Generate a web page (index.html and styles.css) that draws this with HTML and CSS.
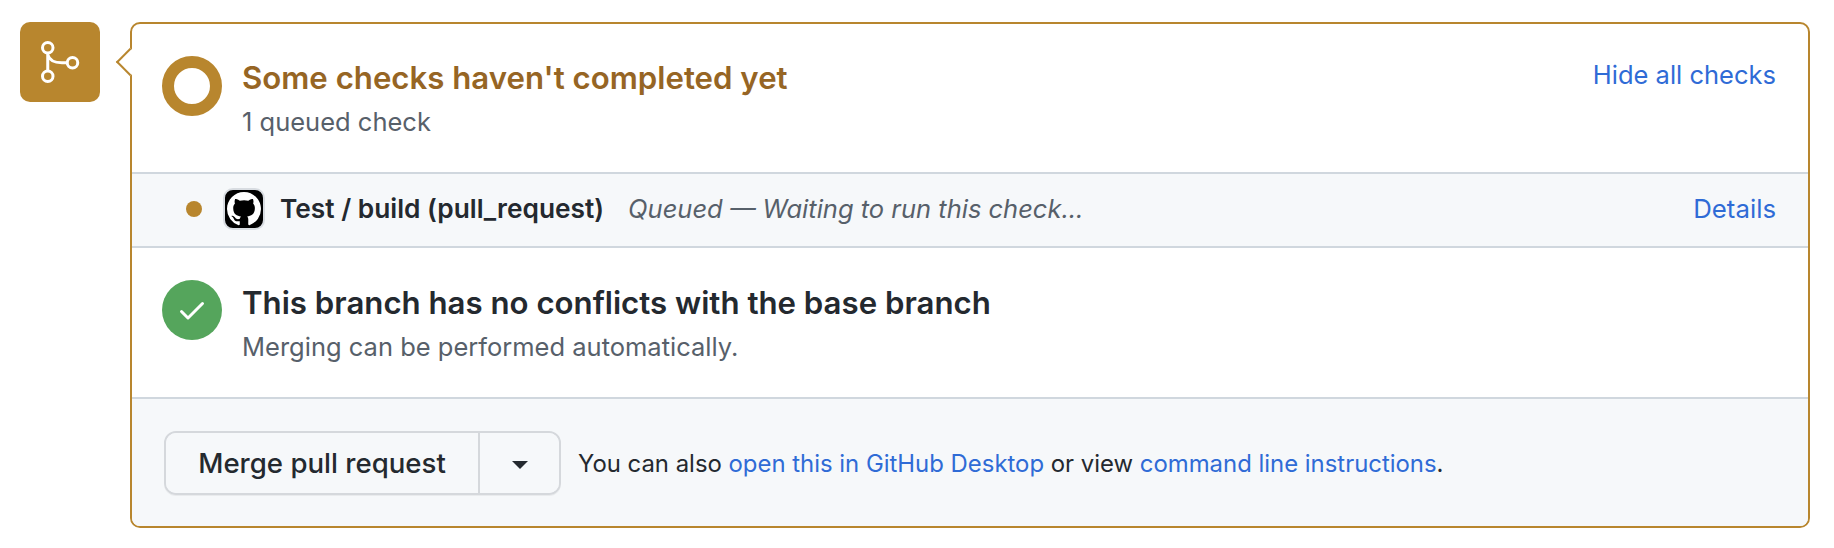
FILE: index.html
```html
<!DOCTYPE html>
<html lang="en">
<head>
    <meta charset="UTF-8">
    <title>Merge status</title>
    <link rel="stylesheet" href="styles.css">
</head>
<body>
    <div class="merge-area">
        <div class="merge-badge">
            <svg class="merge-icon" viewBox="0 0 16 16" width="48" height="48">
                <circle cx="4.25" cy="3.25" r="1.75"></circle>
                <circle cx="4.25" cy="12.75" r="1.75"></circle>
                <circle cx="12.5" cy="8.25" r="1.75"></circle>
                <path d="M4.25 5v6M4.25 5.5C4.7 7.3 6.6 8.25 9 8.25h1.75"></path>
            </svg>
        </div>
        <div class="merge-box">
            <div class="box-caret"></div>

            <div class="section section-checks">
                <div class="status-ring"></div>
                <div class="section-text">
                    <h3 class="section-title title-pending">Some checks haven't completed yet</h3>
                    <div class="section-sub">1 queued check</div>
                </div>
                <a class="link toggle-link" href="#">Hide all checks</a>
            </div>

            <div class="check-row">
                <span class="check-dot"></span>
                <span class="check-avatar">
                    <svg viewBox="0 0 16 16" width="34" height="34">
                        <path d="M8 0c4.42 0 8 3.58 8 8a8.013 8.013 0 0 1-5.45 7.59c-.4.08-.55-.17-.55-.38 0-.27.01-1.13.01-2.2 0-.75-.25-1.23-.54-1.48 1.78-.2 3.65-.88 3.65-3.95 0-.88-.31-1.59-.82-2.15.08-.2.36-1.02-.08-2.12 0 0-.67-.22-2.2.82-.64-.18-1.32-.27-2-.27-.68 0-1.36.09-2 .27-1.53-1.03-2.2-.82-2.2-.82-.44 1.1-.16 1.92-.08 2.12-.51.56-.82 1.28-.82 2.15 0 3.06 1.86 3.75 3.64 3.95-.23.2-.44.55-.51 1.07-.46.21-1.61.55-2.33-.66-.15-.24-.6-.83-1.23-.82-.67.01-.27.38.01.53.34.19.73.9.82 1.13.16.45.68 1.31 2.69.94 0 .67.01 1.3.01 1.49 0 .21-.15.45-.55.38A7.995 7.995 0 0 1 0 8c0-4.42 3.58-8 8-8Z"></path>
                    </svg>
                </span>
                <strong class="check-name">Test / build (pull_request)</strong>
                <em class="check-note">Queued — Waiting to run this check...</em>
                <a class="link details-link" href="#">Details</a>
            </div>

            <div class="section section-conflicts">
                <div class="status-ok">
                    <svg viewBox="0 0 16 16" width="32" height="32">
                        <path d="M13.78 4.22a.75.75 0 0 1 0 1.06l-7.25 7.25a.75.75 0 0 1-1.06 0L2.22 9.28a.751.751 0 0 1 .018-1.042.751.751 0 0 1 1.042-.018L6 10.94l6.72-6.72a.75.75 0 0 1 1.06 0Z"></path>
                    </svg>
                </div>
                <div class="section-text">
                    <h3 class="section-title">This branch has no conflicts with the base branch</h3>
                    <div class="section-sub">Merging can be performed automatically.</div>
                </div>
            </div>

            <div class="merge-footer">
                <div class="btn-group">
                    <button class="btn btn-merge">Merge pull request</button>
                    <button class="btn btn-arrow"><span class="arrow-down"></span></button>
                </div>
                <span class="footer-note">You can also <a class="link" href="#">open this in GitHub Desktop</a> or view <a class="link" href="#">command line instructions</a>.</span>
            </div>
        </div>
    </div>
</body>
</html>
```

FILE: styles.css
```css
* {
    box-sizing: border-box;
}

body {
    margin: 0;
    background-color: #fff;
    font-family: 'Inter', 'Liberation Sans', sans-serif;
    color: #24292f;
}

.merge-area {
    display: flex;
    align-items: flex-start;
    gap: 30px;
    padding: 22px 24px 20px 20px;
}

.merge-badge {
    flex: none;
    display: flex;
    justify-content: center;
    align-items: center;
    width: 80px;
    height: 80px;
    border-radius: 10px;
    background-color: #b8862e;
}

.merge-icon {
    margin-right: 2px;
    fill: none;
    stroke: #fff;
    stroke-width: 1;
}

.merge-box {
    position: relative;
    flex: 1;
    height: 506px;
    display: flex;
    flex-direction: column;
    border: 2px solid #b8862e;
    border-radius: 10px;
}

.box-caret {
    position: absolute;
    left: -12px;
    top: 28px;
    width: 20px;
    height: 20px;
    background-color: #fff;
    border-left: 2px solid #b8862e;
    border-bottom: 2px solid #b8862e;
    transform: rotate(45deg);
}

.section {
    display: flex;
    align-items: flex-start;
    padding: 32px 32px 0 30px;
}

.section-checks {
    height: 148px;
}

.section-conflicts {
    height: 151px;
    border-top: 2px solid #d0d7de;
}

.status-ring {
    flex: none;
    width: 60px;
    height: 60px;
    border: 12px solid #b8862e;
    border-radius: 50%;
}

.status-ok {
    flex: none;
    display: flex;
    justify-content: center;
    align-items: center;
    width: 60px;
    height: 60px;
    border-radius: 50%;
    background-color: #55a55c;
    fill: #fff;
}

.section-text {
    flex: 1;
    margin-left: 20px;
}

.section-title {
    margin: 0 0 4px;
    font-size: 31.2px;
    line-height: 44px;
    font-weight: 600;
}

.section-conflicts .section-title {
    margin-top: 1px;
    margin-bottom: 4px;
}

.title-pending {
    color: #966524;
}

.section-sub {
    font-size: 25.5px;
    line-height: 36px;
    color: #57606a;
}

.link {
    color: #2f6bd6;
    text-decoration: none;
}

.toggle-link {
    margin-top: 1px;
    font-size: 25.5px;
    line-height: 36px;
}

.details-link {
    font-size: 25.8px;
}

.check-row {
    height: 74px;
    display: flex;
    align-items: center;
    padding: 0 32px 3px 54px;
    background-color: #f6f8fa;
    border-top: 2px solid #d0d7de;
    font-size: 25.5px;
}

.check-dot {
    flex: none;
    width: 16px;
    height: 16px;
    border-radius: 50%;
    background-color: #b8862e;
}

.check-avatar {
    flex: none;
    display: flex;
    justify-content: center;
    align-items: center;
    width: 42px;
    height: 42px;
    margin-left: 21px;
    border: 2px solid #d8dce1;
    border-radius: 10px;
    background-color: #000;
    fill: #fff;
}

.check-name {
    margin-left: 15px;
    font-size: 26.3px;
    font-weight: 600;
}

.check-note {
    flex: 1;
    margin-left: 24px;
    color: #57606a;
}

.merge-footer {
    flex: 1;
    display: flex;
    align-items: center;
    gap: 17px;
    padding: 0 32px 0 32px;
    background-color: #f6f8fa;
    border-top: 2px solid #d0d7de;
    border-radius: 0 0 8px 8px;
}

.btn-group {
    flex: none;
    display: flex;
    height: 64px;
    border: 2px solid #d5d8dc;
    border-radius: 12px;
    box-shadow: 0 1px 0 rgba(31, 35, 40, 0.06);
}

.btn {
    background-color: #f6f8fa;
    border: none;
    font-family: inherit;
    color: #24292f;
    padding: 0;
}

.btn-merge {
    width: 314px;
    border-right: 2px solid #d5d8dc;
    border-radius: 10px 0 0 10px;
    font-size: 27.6px;
    font-weight: 500;
}

.btn-arrow {
    width: 79px;
    display: flex;
    justify-content: center;
    align-items: center;
    border-radius: 0 10px 10px 0;
}

.arrow-down {
    width: 0;
    height: 0;
    border-top: 8px solid #24292f;
    border-left: 8px solid transparent;
    border-right: 8px solid transparent;
    margin-top: 4px;
}

.footer-note {
    padding-top: 2px;
    font-size: 23.9px;
}
```
